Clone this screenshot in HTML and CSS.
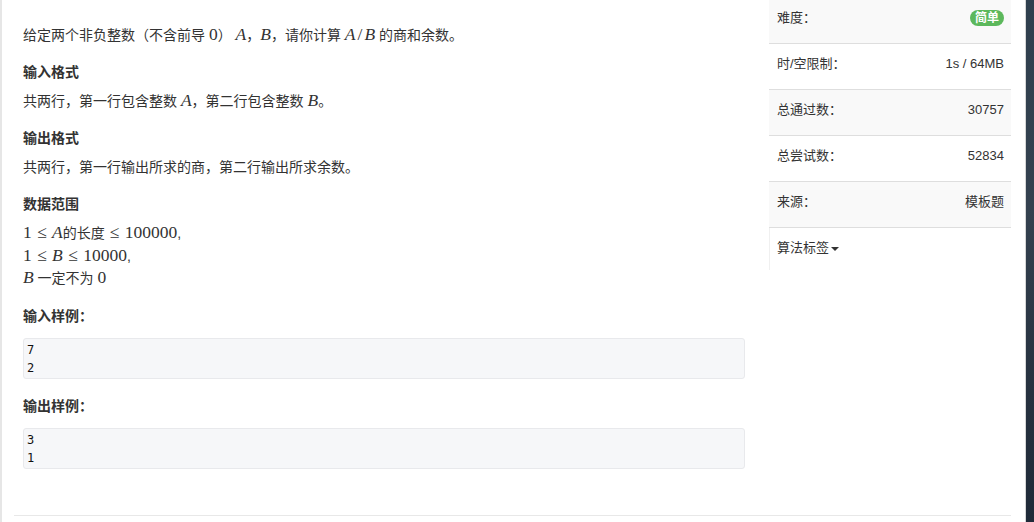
FILE: index.html
```html
<!DOCTYPE html>
<html lang="zh-CN">
<head>
    <meta charset="UTF-8">
    <title>A/B</title>
    <link rel="stylesheet" href="styles.css">
</head>
<body>
    <div class="page">
        <div class="main">
            <div class="content">
                <p>给定两个非负整数（不含前导 <span class="m">0</span>） <span class="m"><i>A</i></span>，<span class="m"><i>B</i></span>，请你计算 <span class="m"><i>A</i><span class="slash">/</span><i>B</i></span> 的商和余数。</p>

                <h4>输入格式</h4>
                <p>共两行，第一行包含整数 <span class="m"><i>A</i></span>，第二行包含整数 <span class="m"><i>B</i></span>。</p>

                <h4>输出格式</h4>
                <p>共两行，第一行输出所求的商，第二行输出所求余数。</p>

                <h4>数据范围</h4>
                <div class="range">
                    <span class="m">1 <span class="op">≤</span> <i>A</i></span>的长度 <span class="m"><span class="op">≤</span> 100000</span>,<br>
                    <span class="m">1 <span class="op">≤</span> <i>B</i> <span class="op">≤</span> 10000</span>,<br>
                    <span class="m"><i>B</i></span> 一定不为 <span class="m">0</span>
                </div>

                <h4 class="sample-title">输入样例：</h4>
                <pre class="sample">7
2</pre>

                <h4 class="sample-title">输出样例：</h4>
                <pre class="sample">3
1</pre>
            </div>

            <div class="sidebar">
                <div class="row first">
                    <span>难度：</span>
                    <span class="badge">简单</span>
                </div>
                <div class="row">
                    <span>时/空限制：</span>
                    <span>1s / 64MB</span>
                </div>
                <div class="row">
                    <span>总通过数：</span>
                    <span>30757</span>
                </div>
                <div class="row">
                    <span>总尝试数：</span>
                    <span>52834</span>
                </div>
                <div class="row">
                    <span>来源：</span>
                    <span>模板题</span>
                </div>
                <div class="row last">
                    <span>算法标签<span class="caret"></span></span>
                </div>
            </div>
        </div>
        <div class="divider"></div>
    </div>
    <div class="dark-strip"></div>
</body>
</html>
```

FILE: styles.css
```css
html, body {
    margin: 0;
    height: 100%;
    overflow: hidden;
}

body {
    display: flex;
    background: #fff;
    color: #333;
    font-family: "Liberation Sans", "Noto Sans CJK SC", sans-serif;
    font-size: 14px;
    line-height: 20px;
}

.page {
    width: 1023px;
    border-left: 2px solid #e6e6e6;
    border-right: 1px solid #d6d6d6;
    background: #fff;
}

.dark-strip {
    flex: 1;
    background: linear-gradient(180deg, #2f3f4e 0%, #34414f 40%, #26313f 75%, #1f2a38 100%);
}

.main {
    display: flex;
    padding-right: 14px;
}

/* Enunciado */
.content {
    flex: 1;
    padding: 25px 24px 0 21px;
}

.content p {
    margin: 0 0 17px;
}

.content h4 {
    margin: 0 0 9px;
    font-size: 14px;
    font-weight: bold;
    line-height: 20px;
}

.m {
    font-family: "Liberation Serif", "DejaVu Serif", serif;
    font-size: 17.5px;
    line-height: 1;
}

.m i {
    font-style: italic;
}

.op {
    padding: 0 1px;
}

.slash {
    padding: 0 2px;
}

.range {
    margin: -1px 0 16px;
    line-height: 22.5px;
}

.content h4.sample-title {
    margin-bottom: 12px;
}

.sample {
    margin: 0 0 17px;
    padding: 2px 3px 1px;
    background: #f6f7f9;
    border: 1px solid #e8e9ec;
    border-radius: 3px;
    font-family: "DejaVu Sans Mono", "Liberation Mono", monospace;
    font-size: 12px;
    line-height: 18px;
    color: #111;
}

.sample:last-child {
    margin-bottom: 0;
}

/* Informações */
.sidebar {
    width: 242px;
    font-size: 13px;
}

.row {
    display: flex;
    justify-content: space-between;
    align-items: flex-start;
    height: 46px;
    box-sizing: border-box;
    padding: 11px 7px 0 8px;
    line-height: 18px;
    border-bottom: 1px solid #dedede;
    background: #fff;
}

.row:nth-child(odd) {
    background: #f9f9f9;
}

.row.first {
    height: 44px;
    padding-top: 9px;
}

.row.last {
    height: 42px;
    border-bottom: none;
    border-left: 1px solid #f0f0f0;
    padding-left: 7px;
}

.badge {
    margin-top: 1px;
    padding: 0 5px;
    height: 16px;
    line-height: 16px;
    border-radius: 8px;
    background: #5cb85c;
    color: #fff;
    font-size: 12px;
    font-weight: bold;
}

.caret {
    display: inline-block;
    width: 0;
    height: 0;
    margin-left: 2px;
    vertical-align: middle;
    border-top: 4px solid #333;
    border-left: 4px solid transparent;
    border-right: 4px solid transparent;
}

.divider {
    margin: 46px 14px 0 12px;
    border-top: 1px solid #e8e8e8;
}
```
